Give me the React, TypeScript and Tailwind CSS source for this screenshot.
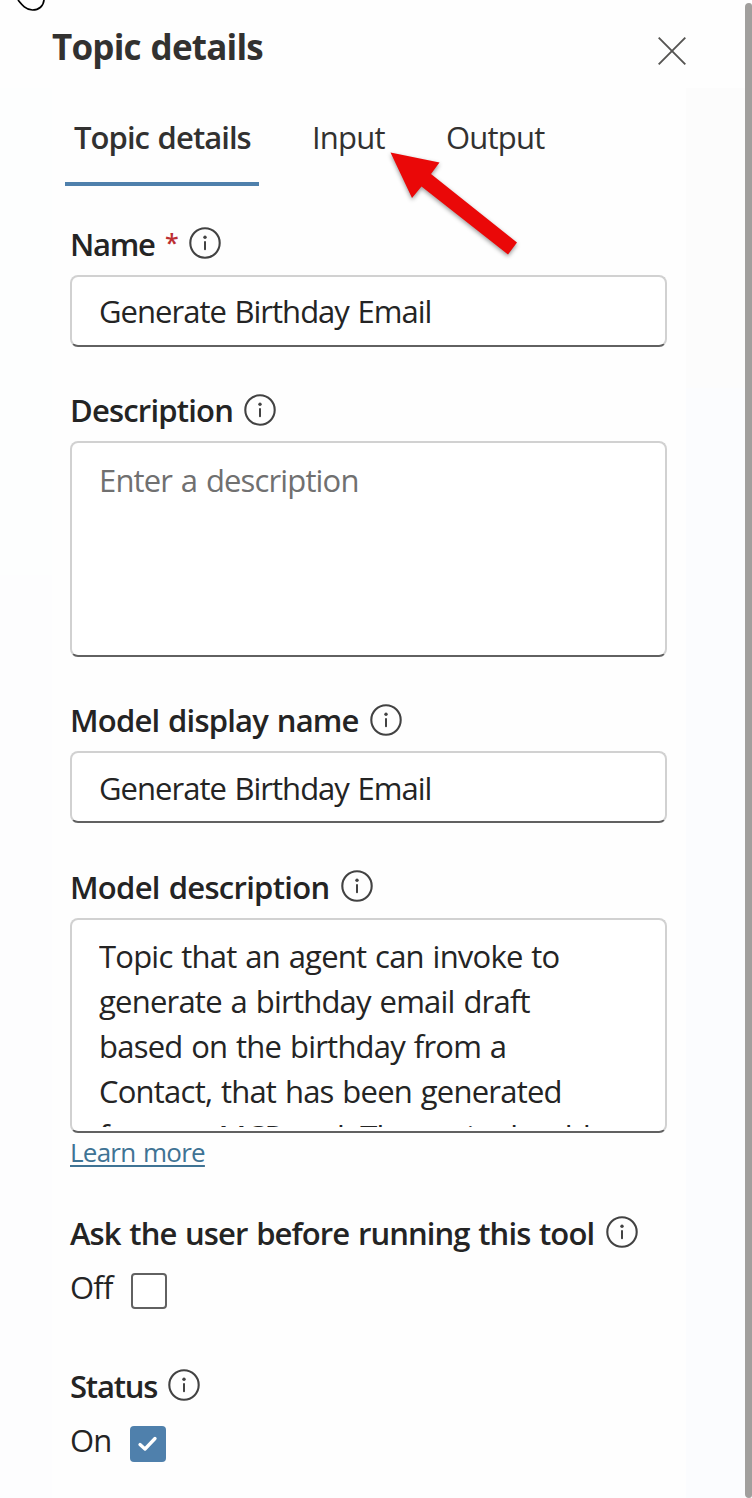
import type { ReactNode } from "react";

function InfoIcon() {
  return (
    <svg className="h-8 w-8 shrink-0" viewBox="0 0 32 32" fill="none">
      <circle cx="16" cy="16" r="14.7" stroke="#424242" strokeWidth="2.1" />
      <circle cx="16" cy="10.3" r="1.7" fill="#424242" />
      <path d="M16 15v7.2" stroke="#424242" strokeWidth="2" strokeLinecap="round" />
    </svg>
  );
}

function Label({ text, fit, required, className = "" }: { text: string; fit: string; required?: boolean; className?: string }) {
  return (
    <div className={`flex h-8 items-center ${className}`}>
      <div className={`flex text-[31px] leading-8 font-semibold whitespace-nowrap ${fit}`}>
        <span>{text}</span>
        {required && <span className="ml-auto w-6 text-[25px] leading-[28px] tracking-normal text-[#bc2f32]">*</span>}
      </div>
      <InfoIcon />
    </div>
  );
}

function Box({ className = "", children }: { className?: string; children: ReactNode }) {
  return (
    <div className={`w-[597px] rounded-lg border-2 border-[#d1d1d1] border-b-[#616161] bg-white pl-[27px] text-[31px] leading-[45px] whitespace-nowrap ${className}`}>
      {children}
    </div>
  );
}

export default function App() {
  return (
    <div className="relative flex h-[1498px] w-[752px] overflow-hidden bg-[#fefefe] font-['Open_Sans','Noto_Sans',sans-serif] text-[#242424] [word-spacing:1.5px]">
      <svg className="absolute top-0 left-0 h-3 w-12" viewBox="0 0 48 12" fill="none">
        <path d="M18 0C22 5 26 10 32.500 10C39 10 43.500 6 44 0" stroke="#000" strokeWidth="1.7" />
      </svg>
      <div className="w-[52px] shrink-0 pt-[88px]">
        <div className="h-[487px] bg-[#fdfefe]" />
        <div className="h-[923px] bg-[#fdfdfe]" />
      </div>
      <main className="flex w-[634px] shrink-0 flex-col bg-[#fefefe]">
        <header className="flex h-[88px] justify-between text-[#323130]">
          <h1 className="pt-[23px] text-[35px] leading-[48px] font-bold tracking-[-0.8px] whitespace-nowrap">Topic details</h1>
          <svg className="mt-[37px] h-7 w-7" viewBox="0 0 28 28" fill="none">
            <path d="M.7.7l26.600 26.600M27.300.7L.7 27.300" stroke="#555452" strokeWidth="1.900" />
          </svg>
        </header>
        <nav className="ml-[13px] flex h-[98px] text-[31px] leading-[98px] whitespace-nowrap text-[#323130]">
          <div className="w-[194px] border-b-4 border-[#4f80ac] pl-[9px] font-semibold tracking-[-0.95px]">Topic details</div>
          <div className="w-[134px] pl-[53px] tracking-[-0.8px]">Input</div>
          <div className="pl-[53px] tracking-[-0.8px]">Output</div>
        </nav>
        <section className="flex flex-col pl-[18px]">
          <Label text="Name" fit="w-[119px] pt-0.5 tracking-[-1.3px]" required className="mt-[41px]" />
          <Box className="mt-4 h-[72px] pt-[12px] tracking-[-0.98px]">Generate Birthday Email</Box>
          <Label text="Description" fit="w-[174px] tracking-[-0.8px]" className="mt-[47px]" />
          <Box className="mt-[15px] h-[216px] pt-[15px] tracking-[-0.85px] text-[#707070]">Enter a description</Box>
          <Label text="Model display name" fit="w-[300px] tracking-[-0.8px]" className="mt-[47px]" />
          <Box className="mt-[15px] h-[72px] pt-[13px] tracking-[-0.98px]">Generate Birthday Email</Box>
          <Label text="Model description" fit="w-[271px] pt-0.5 tracking-[-0.7px]" className="mt-[47px]" />
          <Box className="mt-4 h-[215px] pt-[14px]">
            <div className="h-[193px] overflow-hidden tracking-[-0.78px]">
              <div>Topic that an agent can invoke to</div>
              <div>generate a birthday email draft</div>
              <div>based on the birthday from a</div>
              <div>Contact, that has been generated</div>
              <div>from an MCP tool. The topic should</div>
            </div>
          </Box>
          <a className="h-10 self-start text-[26px] leading-[38px] tracking-[-0.75px] whitespace-nowrap text-[#3f7394] underline decoration-2 underline-offset-3">Learn more</a>
          <Label text="Ask the user before running this tool" fit="w-[536px] pt-0.5 tracking-[-0.9px]" className="mt-[43px]" />
          <div className="mt-[25px] flex h-9 items-start">
            <span className="w-[61px] text-[31px] leading-[28px] tracking-[-0.8px]">Off</span>
            <div className="h-9 w-9 rounded-[4px] border-2 border-[#616161] bg-white" />
          </div>
          <Label text="Status" fit="w-[98px] pt-0.5 tracking-[-1.2px]" className="mt-[60px]" />
          <div className="mt-[25px] flex h-9 items-start">
            <span className="w-[60px] text-[31px] leading-[28px] tracking-[-0.8px]">On</span>
            <svg className="h-9 w-9 rounded-[4px] bg-[#4f80ac]" viewBox="0 0 36 36" fill="none">
              <path d="M10 18.500l5 4.500L25 12.500" stroke="#fff" strokeWidth="3.3" strokeLinecap="round" strokeLinejoin="round" />
            </svg>
          </div>
        </section>
      </main>
      <div className="w-[59px] shrink-0 pt-[88px]">
        <div className="h-[300px] bg-[#fcfcfc]" />
        <div className="h-[1110px] bg-[#fbfcfe]" />
      </div>
      <div className="mt-[3px] w-[7px] rounded-l-[4px] rounded-r-[3px] bg-[#a19f9d]" />
      <svg className="absolute top-[145px] left-[380px] h-[125px] w-[150px] drop-shadow-[0_2px_2px_rgba(0,0,0,0.4)]" viewBox="380 145 150 125">
        <path d="M390.500 152.500L439.500 162.500L431 174L517 242.500L508 254.500L421.500 186.500L412 198Z" fill="#ea0808" />
      </svg>
    </div>
  );
}
